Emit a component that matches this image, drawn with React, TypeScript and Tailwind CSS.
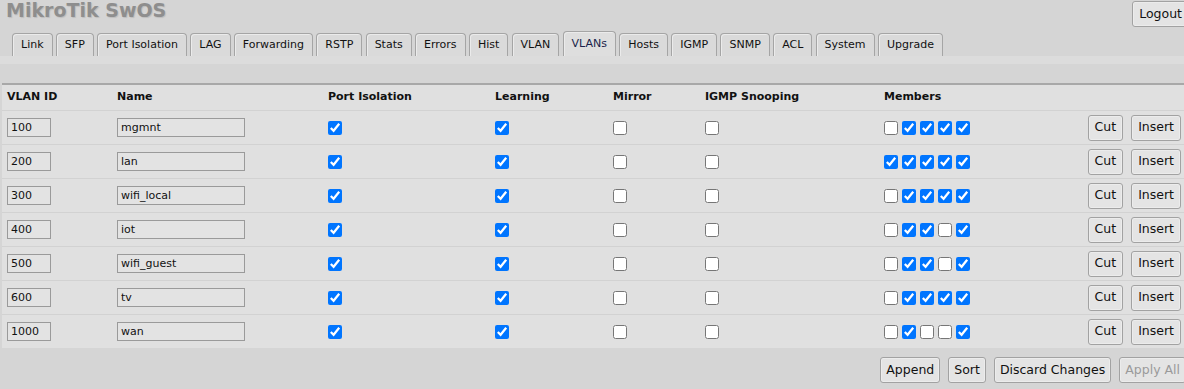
import React from "react";

const TABS = ["Link", "SFP", "Port Isolation", "LAG", "Forwarding", "RSTP", "Stats", "Errors", "Hist", "VLAN", "VLANs", "Hosts", "IGMP", "SNMP", "ACL", "System", "Upgrade"];

const VLANS = [
  { id: "100", name: "mgmnt", iso: true, learn: true, mirror: false, igmp: false, members: [false, true, true, true, true] },
  { id: "200", name: "lan", iso: true, learn: true, mirror: false, igmp: false, members: [true, true, true, true, true] },
  { id: "300", name: "wifi_local", iso: true, learn: true, mirror: false, igmp: false, members: [false, true, true, true, true] },
  { id: "400", name: "iot", iso: true, learn: true, mirror: false, igmp: false, members: [false, true, true, false, true] },
  { id: "500", name: "wifi_guest", iso: true, learn: true, mirror: false, igmp: false, members: [false, true, true, false, true] },
  { id: "600", name: "tv", iso: true, learn: true, mirror: false, igmp: false, members: [false, true, true, true, true] },
  { id: "1000", name: "wan", iso: true, learn: true, mirror: false, igmp: false, members: [false, true, false, false, true] },
];

function Check({ on }: { on: boolean }) {
  return <input type="checkbox" defaultChecked={on} className="m-0 w-[14px] h-[14px] shrink-0" />;
}

function Btn({ children, disabled, tight }: { children: React.ReactNode; disabled?: boolean; tight?: boolean }) {
  return (
    <button
      className={
        "h-[26px] text-[12.5px] border border-[#a2a2a2] rounded-[3px] bg-[#e4e4e4] shadow-[inset_0_0_0_1px_#ececec] " +
        (tight ? "px-[5px] " : "px-[6px] ") +
        (disabled ? "text-[#9a9a9a]" : "text-[#111]")
      }
    >
      {children}
    </button>
  );
}

export default function App() {
  return (
    <div className="w-[1184px] h-[389px] overflow-hidden bg-[#d5d5d5] font-['DejaVu_Sans',Verdana,sans-serif] text-[11px] text-[#111]">
      {/* header */}
      <div className="flex justify-between items-start h-[32px]">
        <div className="pl-[6px] text-[19px] leading-[20px] font-bold text-[#8e8e8e] [text-shadow:1px_1px_1px_#bdbdbd]">
          MikroTik SwOS
        </div>
        <div className="mt-[1px] mr-[-5px]">
          <Btn>Logout</Btn>
        </div>
      </div>

      {/* tabs */}
      <div className="flex items-end gap-[3.3px] pl-[12px] h-[24px]">
        {TABS.map((t) => (
          <div
            key={t}
            className={
              "px-[8px] border border-b-0 border-[#a5a5a5] rounded-t-[4px] shadow-[inset_1px_1px_0_#ebebeb] flex items-center " +
              (t === "VLANs" ? "h-[25px] bg-[#dedede] text-[#1a1f4a]" : "h-[23px] bg-[#dadada]")
            }
          >
            {t}
          </div>
        ))}
      </div>
      <div className="h-[8px] bg-[#dcdcdc]" />
      <div className="h-[19px]" />

      {/* table */}
      <div className="ml-[2px] bg-[#e0e0e0] border-t-2 border-[#a8a8a8]">
        <div className="flex items-center h-[25px] pl-[5px] font-bold">
          <div className="w-[110px]">VLAN ID</div>
          <div className="w-[211px]">Name</div>
          <div className="w-[167px]">Port Isolation</div>
          <div className="w-[118px]">Learning</div>
          <div className="w-[92px]">Mirror</div>
          <div className="w-[179px]">IGMP Snooping</div>
          <div>Members</div>
        </div>
        {VLANS.map((v) => (
          <div key={v.id} className="flex items-center h-[34px] pl-[5px] pr-[3px] border-t border-[#d2d2d2]">
            <div className="w-[110px]">
              <input readOnly value={v.id} className="w-[44px] h-[19px] border border-[#9a9a9a] bg-[#e3e3e3] px-[3px] outline-none" />
            </div>
            <div className="w-[211px]">
              <input readOnly value={v.name} className="w-[128px] h-[19px] border border-[#9a9a9a] bg-[#e3e3e3] px-[3px] outline-none" />
            </div>
            <div className="w-[167px] flex"><Check on={v.iso} /></div>
            <div className="w-[118px] flex"><Check on={v.learn} /></div>
            <div className="w-[92px] flex"><Check on={v.mirror} /></div>
            <div className="w-[179px] flex"><Check on={v.igmp} /></div>
            <div className="flex gap-[4px]">
              {v.members.map((m, i) => (
                <Check key={i} on={m} />
              ))}
            </div>
            <div className="flex-1" />
            <div className="flex gap-[8px]">
              <Btn>Cut</Btn>
              <Btn>Insert</Btn>
            </div>
          </div>
        ))}
      </div>

      {/* footer buttons */}
      <div className="flex justify-end gap-[8px] mt-[9px] mr-[-2px]">
        <Btn tight>Append</Btn>
        <Btn tight>Sort</Btn>
        <Btn tight>Discard Changes</Btn>
        <Btn tight disabled>Apply All</Btn>
      </div>
    </div>
  );
}
